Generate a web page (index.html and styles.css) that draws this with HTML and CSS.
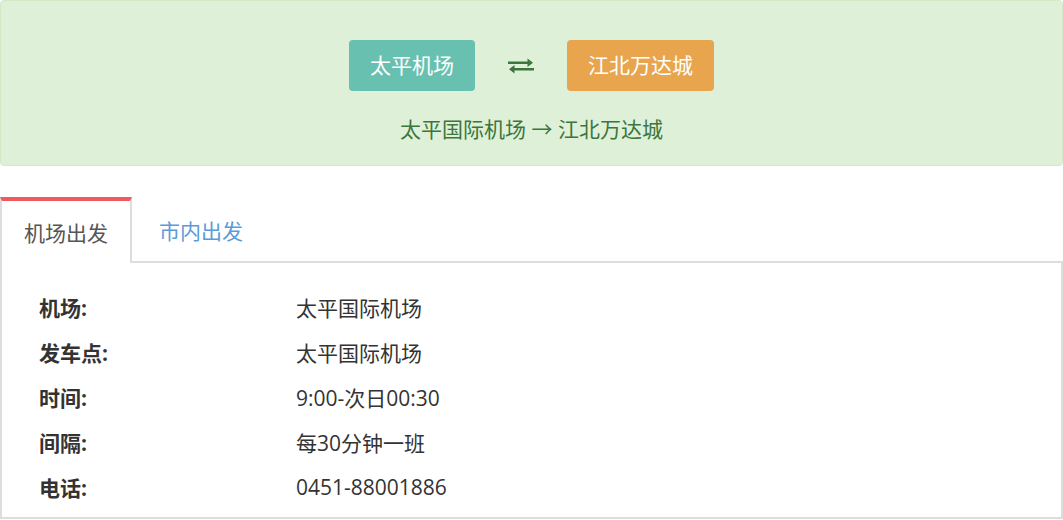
FILE: index.html
```html
<!DOCTYPE html>
<html lang="zh-CN">
<head>
<meta charset="utf-8">
<link rel="stylesheet" href="styles.css">
</head>
<body>
<div class="route-alert">
  <div class="route-buttons">
    <span class="place-btn place-btn-teal">太平机场</span>
    <svg class="swap-icon" width="26" height="16" viewBox="0 0 26 16">
      <path d="M0 3.5h19.5V0.5L25 4.8l-5.5 4.3V6H0z" fill="#3c763d"/>
      <path d="M26 12.5H6.5v3L1 11.2l5.5-4.3V10H26z" fill="#3c763d"/>
    </svg>
    <span class="place-btn place-btn-orange">江北万达城</span>
  </div>
  <div class="route-text">太平国际机场 → 江北万达城</div>
</div>

<div class="tabs">
  <div class="tab tab-active">机场出发</div>
  <div class="tab tab-link">市内出发</div>
  <div class="tab-fill"></div>
</div>
<div class="panel">
  <div class="info-row"><span class="info-label">机场:</span><span class="info-value">太平国际机场</span></div>
  <div class="info-row"><span class="info-label">发车点:</span><span class="info-value">太平国际机场</span></div>
  <div class="info-row"><span class="info-label">时间:</span><span class="info-value">9:00-次日00:30</span></div>
  <div class="info-row"><span class="info-label">间隔:</span><span class="info-value">每30分钟一班</span></div>
  <div class="info-row"><span class="info-label">电话:</span><span class="info-value">0451-88001886</span></div>
</div>
</body>
</html>
```
FILE: styles.css
```css
* { box-sizing: border-box; }
html, body { margin: 0; padding: 0; background: #fff; }
body {
  font-family: "Open Sans", "Noto Sans CJK SC", sans-serif;
  font-size: 21px;
  color: #333;
  width: 1063px;
}
.route-alert {
  height: 166px;
  background: #dff0d8;
  border: 1px solid #d6e9c6;
  border-radius: 4px;
  color: #3c763d;
  padding-top: 39px;
  display: flex;
  flex-direction: column;
  align-items: center;
}
.route-buttons {
  display: flex;
  align-items: center;
  gap: 33px;
  height: 51px;
}
.place-btn {
  display: flex;
  align-items: center;
  height: 51px;
  padding: 0 21px;
  border-radius: 4px;
  color: #fff;
  line-height: 1;
}
.place-btn-teal { background: #68c1b0; }
.place-btn-orange { background: #e8a54e; }
.swap-icon { display: block; }
.route-text {
  margin-top: 24px;
  line-height: 28px;
}
.tabs {
  display: flex;
  margin-top: 31px;
  height: 66px;
}
.tab {
  height: 66px;
  display: flex;
  align-items: center;
  padding: 4px 0 0;
}
.tab-active {
  width: 132px;
  justify-content: center;
  background: #fff;
  border-top: 4px solid #f05a5f;
  border-left: 2px solid #ddd;
  border-right: 2px solid #ddd;
  color: #555;
  padding-top: 0;
}
.tab-link {
  width: 138px;
  justify-content: center;
  color: #5a9bd8;
  border-bottom: 2px solid #ddd;
  padding-bottom: 0;
  padding-top: 2px;
}
.tab-fill {
  flex: 1;
  border-bottom: 2px solid #ddd;
}
.panel {
  height: 256px;
  border: 2px solid #ddd;
  border-top: none;
  padding: 21px 0 0 37px;
}
.info-row {
  display: flex;
  height: 45px;
  align-items: center;
}
.info-label {
  width: 257px;
  font-weight: bold;
  color: #333;
}
.info-value {
  color: #333;
}
```
